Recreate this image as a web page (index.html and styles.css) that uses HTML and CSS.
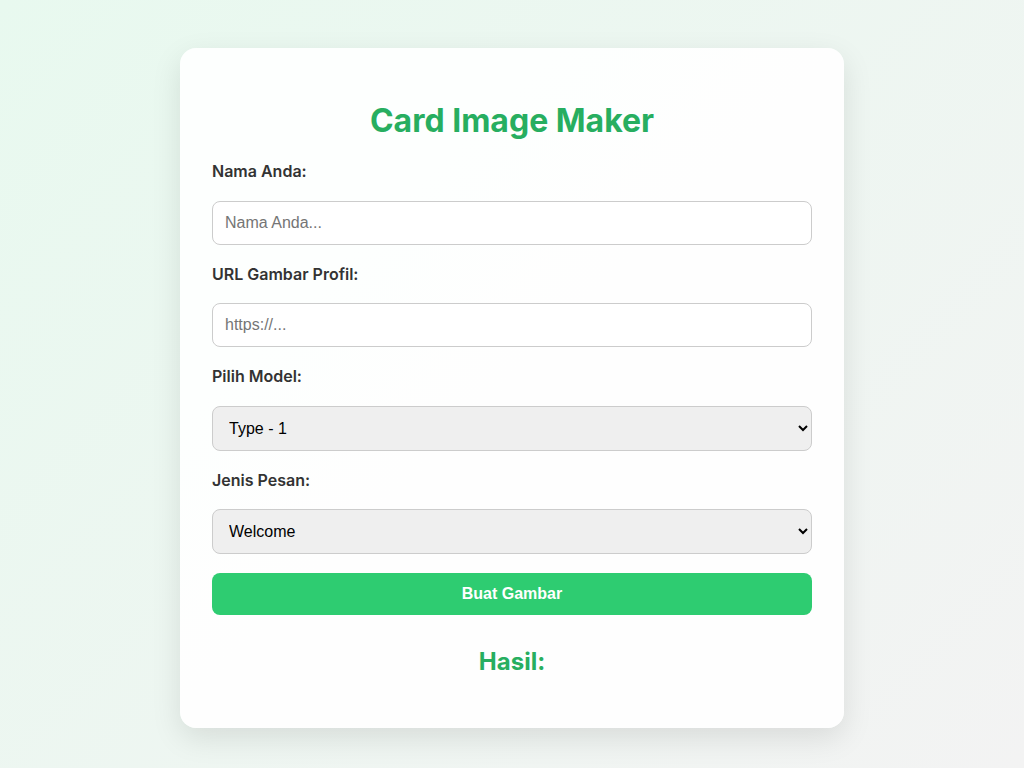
FILE: index.html
```html
<!DOCTYPE html>
<html lang="id">
<head>
    <meta charset="UTF-8">
    <meta name="viewport" content="width=device-width, initial-scale=1.0">
    <title>Card Image Maker</title>
    <link rel="stylesheet" href="styles.css">
</head>
<body>

    <div class="container">
        <h1>Card Image Maker</h1>

        <label for="nama">Nama Anda:</label>
        <input type="text" id="nama" placeholder="Nama Anda...">

        <label for="avatar">URL Gambar Profil:</label>
        <input type="text" id="avatar" placeholder="https://...">

        <label for="model">Pilih Model:</label>
        <select id="model">
            <option value="1">Type - 1</option>
            <option value="2">Type - 2</option>
            <option value="3">Type - 3</option>
        </select>

        <label for="pesan">Jenis Pesan:</label>
        <select id="pesan">
            <option value="welcome">Welcome</option>
            <option value="goodbye">Goodbye</option>
        </select>

        <button type="button" class="btn">Buat Gambar</button>

        <div class="result">
            <h2>Hasil:</h2>
            <div id="hasil"></div>
        </div>
    </div>

</body>
</html>
```

FILE: styles.css
```css
/* Reset */
* {
    box-sizing: border-box;
}

body {
    margin: 0;
    padding: 48px 0 40px;
    min-height: 100vh;
    font-family: 'Inter', 'Liberation Sans', Arial, sans-serif;
    background: linear-gradient(135deg, #e8f9ef, #f3f3f3);
}

/* Kartu utama */
.container {
    width: 664px;
    margin: 0 auto;
    padding: 32px;
    background: rgba(255, 255, 255, 0.9);
    border-radius: 16px;
    box-shadow: 0 10px 30px rgba(0, 0, 0, 0.1);
}

.container h1 {
    margin: 21px 0 21px;
    font-size: 32px;
    font-weight: 700;
    text-align: center;
    color: #27ae60;
}

/* Form */
label {
    display: block;
    margin-bottom: 19.6px;
    font-size: 16px;
    font-weight: 600;
    color: #333;
}

input,
select {
    display: block;
    width: 100%;
    margin-bottom: 19px;
    padding: 12px;
    border: 1px solid #ccc;
    border-radius: 8px;
    font-family: 'Liberation Sans', Arial, sans-serif;
    font-size: 16px;
    color: #000;
}

input {
    height: 44px;
    background: #fff;
}

input::placeholder {
    color: #757575;
}

select {
    height: 45px;
    background: #efefef;
}

.btn {
    display: block;
    width: 100%;
    padding: 12px;
    border: none;
    border-radius: 8px;
    background: #2ecc71;
    color: #fff;
    font-family: 'Liberation Sans', Arial, sans-serif;
    font-size: 16px;
    font-weight: 700;
    cursor: pointer;
}

/* Hasil */
.result {
    text-align: center;
}

.result h2 {
    margin: 32px 0 20px;
    font-size: 24px;
    font-weight: 700;
    color: #27ae60;
}
```
